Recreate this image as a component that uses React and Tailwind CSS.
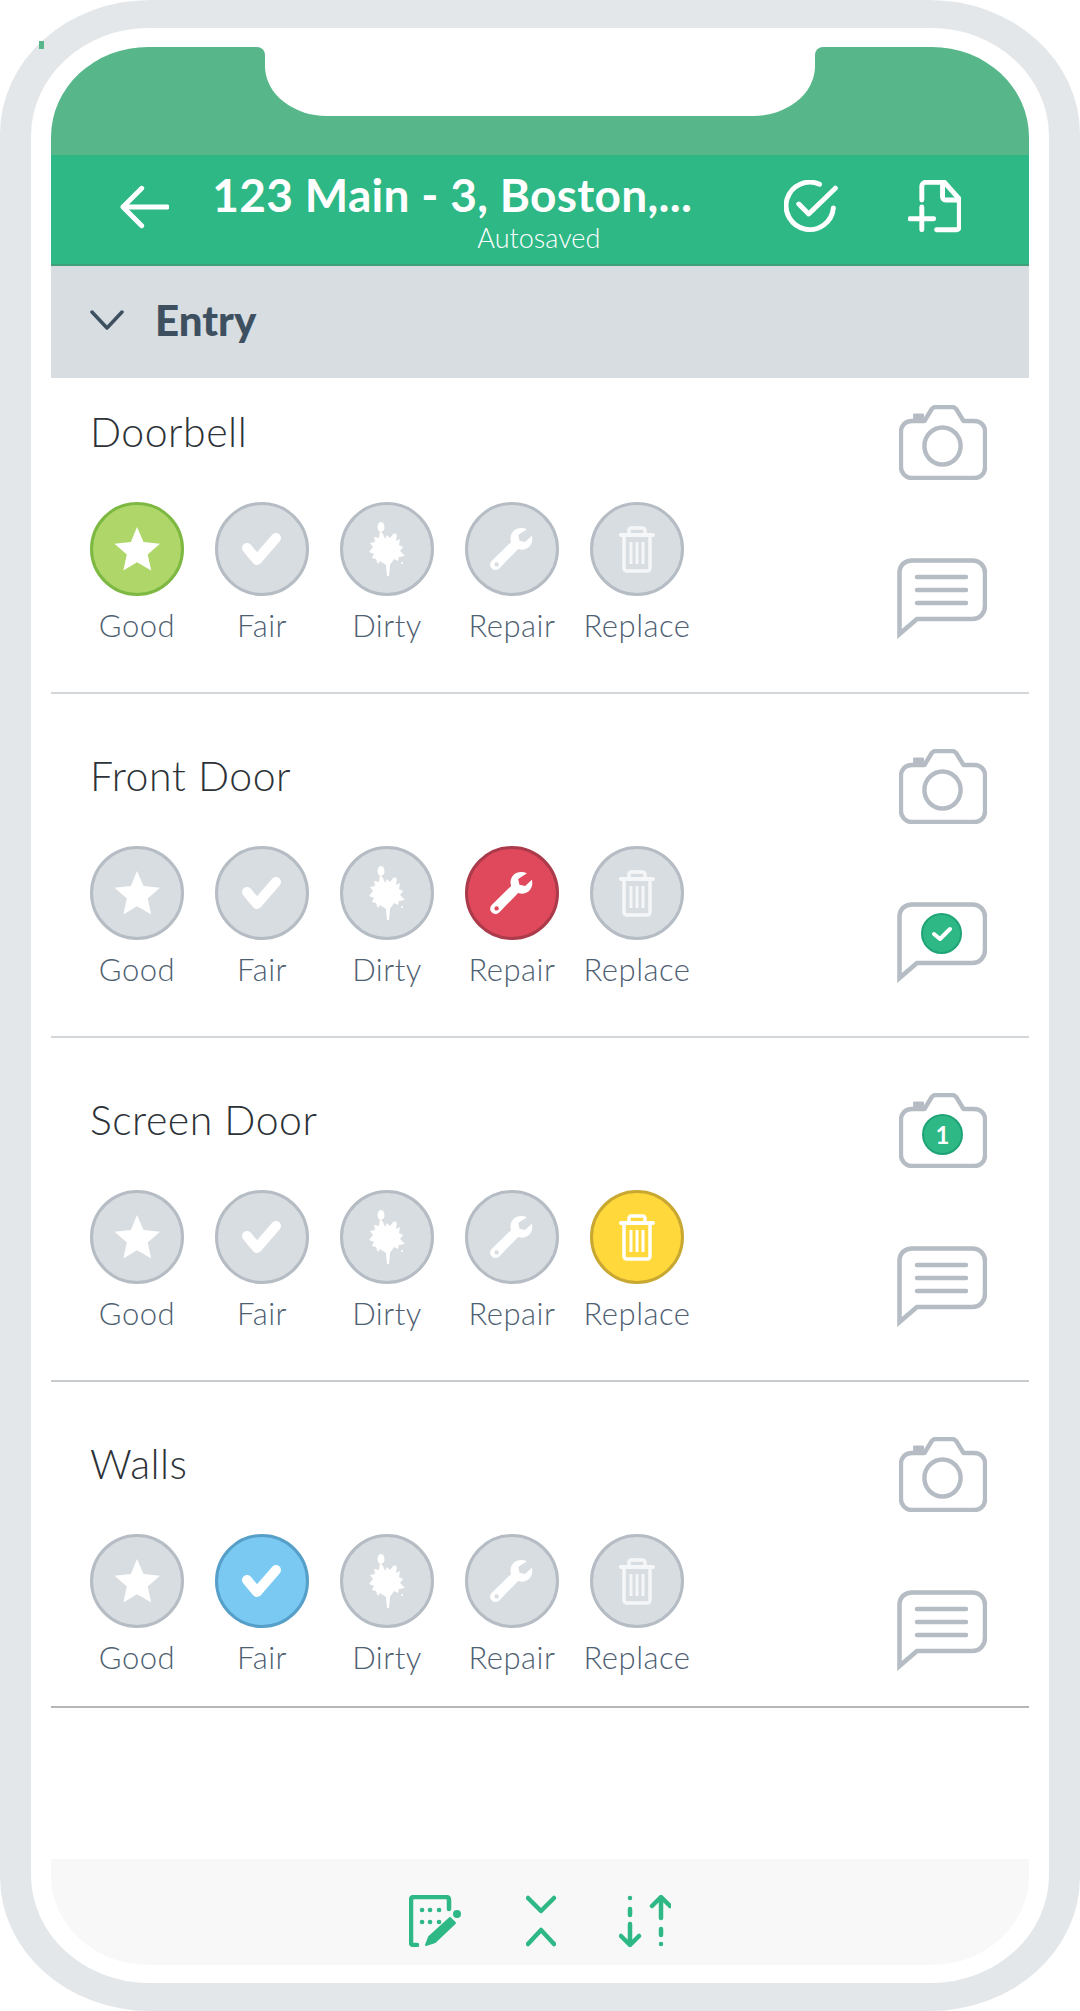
import React from "react";

const Star = () => (
  <svg width="48" height="46" viewBox="0 0 48 46"><path d="M24 1l6.600 15 16.400 1.700-12.300 10.800 3.500 16L24 36.200 10.300 44.500l3.500-16L1.500 17.700 17.900 16z" fill="#fff" /></svg>
);
const Check = () => (
  <svg width="42" height="36" viewBox="0 0 42 36"><path d="M6 17l10 12L35 7" fill="none" stroke="#fff" strokeWidth="10" strokeLinecap="round" strokeLinejoin="round" /></svg>
);
const Splat = () => (
  <svg width="38" height="56" viewBox="0 0 38 56">
    <path d="M12 10L15 13L17 18L19 14L22 17L26 12L29 14L28 20L32 18L31 24L35 26L32 30L37 35L31 36L30 40L26 38L24 41L22 44L21 55L19 55L18 44L15 42L12 40L10 43L8 38L4 37L6 33L1 31L5 26L2 22L7 21L6 16L11 17z" fill="#fff" />
    <ellipse cx="13" cy="6" rx="3.500" ry="5" fill="#fff" />
    <circle cx="34" cy="42" r="1" fill="#fff" />
  </svg>
);
const Wrench = ({ hole }) => (
  <svg width="44" height="44" viewBox="0 0 50 50"><path d="M42 2.500C36 0 29 1 25.500 6c-2.500 3.500-2.700 7.500-1.500 11L2.500 38c-3 3-3 6.500-.5 9s6 2.500 9-.5L32 25c4 1.500 8.500 1 12-2 3.500-3.500 5-8 3.500-13L40 17l-6.500-1.500L32 9z" fill="#fff"/><circle cx="7.500" cy="42.500" r="2.500" fill={hole} /></svg>
);
const Trash = ({ muted }) => (
  <svg className={muted ? "opacity-75" : ""} width="36" height="47" viewBox="0 0 36 47" fill="none" stroke="#fff" strokeWidth="3.500">
    <path d="M2 9h32" strokeWidth="4" strokeLinecap="round" />
    <path d="M10 8V4c0-1 1-2 2-2h12c1 0 2 1 2 2v4" />
    <path d="M5 10v32c0 2 1 3 3 3h20c2 0 3-1 3-3V10" />
    <path d="M12 16v22M18 16v22M24 16v22" strokeWidth="3" />
  </svg>
);

const Camera = ({ badge }) => (
  <div className="relative ml-[2px] h-[75px] w-[88px]">
    <svg width="88" height="75" viewBox="0 0 90 75" preserveAspectRatio="none" fill="none" stroke="#b5bcc4" strokeWidth="4.500" strokeLinejoin="round">
      <path d="M13 16h13l7.500-12c1-1 2-2 3.500-2h18c1.500 0 2.500 1 3.500 2L66 16h11c7 0 11 5 11 10v36c0 7-5 11-11 11H13C7 73 2 68 2 62V27c0-6 4-11 11-11z" />
      <path d="M15 14V9h10v5" fill="#b5bcc4" strokeWidth="1" />
      {!badge && <circle cx="44.500" cy="41" r="18.500" />}
    </svg>
    {badge && (
      <div className="absolute left-[23px] top-[21px] flex h-[41px] w-[41px] items-center justify-center rounded-full border-2 border-[#1fa477] bg-[#2eb886] text-[24px] font-bold text-white">
        {badge}
      </div>
    )}
  </div>
);

const Chat = ({ checked }) => (
  <div className="relative h-[81px] w-[90px]">
    <svg width="90" height="81" viewBox="0 0 90 81" fill="none" stroke="#b5bcc4" strokeWidth="4.500" strokeLinejoin="miter">
      <path d="M2.500 76V15C2.500 7 8 2.500 15 2.500h60C83 2.500 88 8 88 15v33c0 7-5 13-13 13H20L2.500 76z" />
      {!checked && (
        <g strokeWidth="4.500" strokeLinecap="round">
          <path d="M20 19h49M20 32h49M20 45h49" />
        </g>
      )}
    </svg>
    {checked && (
      <div className="absolute left-[24px] top-[11px] flex h-[41px] w-[41px] items-center justify-center rounded-full border-2 border-[#1fa477] bg-[#2eb886]">
        <svg width="22" height="18" viewBox="0 0 22 18"><path d="M3 9l6 5L19 4" fill="none" stroke="#fff" strokeWidth="4" strokeLinecap="round" strokeLinejoin="round" /></svg>
      </div>
    )}
  </div>
);

const OPTIONS = ["Good", "Fair", "Dirty", "Repair", "Replace"];

const SELECTED = {
  Good: "bg-[#aed668] border-[#7db843]",
  Fair: "bg-[#79c9f2] border-[#559fc8]",
  Repair: "bg-[#e0485c] border-[#ab3a4a]",
  Replace: "bg-[#ffd83b] border-[#c9a832]",
};

function OptionIcon({ label, active }) {
  if (label === "Good") return <Star />;
  if (label === "Fair") return <Check />;
  if (label === "Dirty") return <Splat />;
  if (label === "Repair") return <Wrench hole={active ? "#e0485c" : "#d8dde1"} />;
  return <Trash muted={!active} />;
}

const ROWS = [
  { title: "Doorbell", selected: "Good", cls: "pt-[34px] pb-[49px] border-[#d4d7d9]" },
  { title: "Front Door", selected: "Repair", commented: true, cls: "pt-[62px] pb-[49px] border-[#d4d7d9]" },
  { title: "Screen Door", selected: "Replace", photos: "1", cls: "pt-[62px] pb-[49px] border-[#c8cbcd]" },
  { title: "Walls", selected: "Fair", cls: "pt-[62px] pb-[31px] border-[#b4b6b8]" },
];

function Row({ title, selected, commented, photos, cls }) {
  return (
    <div className={`flex justify-between border-b-2 pl-[39px] pr-[42px] ${cls}`}>
      <div>
        <div className="h-[40px] text-[41px] font-light leading-[40px] tracking-[0.5px] text-[#2c3237]">{title}</div>
        <div className="mt-[50px] flex gap-[31px]">
          {OPTIONS.map((label) => (
            <div key={label} className="flex w-[94px] flex-col items-center">
              <div className={`flex h-[94px] w-[94px] items-center justify-center rounded-full border-[3px] ${selected === label ? SELECTED[label] : "border-[#b5bcc4] bg-[#d8dde1]"}`}>
                <OptionIcon label={label} active={selected === label} />
              </div>
              <div className="mt-[11px] h-[36px] whitespace-nowrap text-[31px] font-light leading-[36px] tracking-[0.5px] text-[#4d6072]">{label}</div>
            </div>
          ))}
        </div>
      </div>
      <div className="-mt-[7px] flex flex-col gap-[78px]">
        <Camera badge={photos} />
        <Chat checked={commented} />
      </div>
    </div>
  );
}

export default function App() {
  return (
    <div className="h-[2011px] w-[1080px] bg-white [font-family:Lato,sans-serif]">
      <div className="relative h-full rounded-[150px/134px] bg-[#e4e7ea] px-[31px] py-[28px]">
        <div className="absolute left-[39px] top-[41px] h-[8px] w-[5px] bg-[#57b78b]" />
        <div className="h-full rounded-[118px/108px] bg-white px-[20px] pb-[18px] pt-[19px]">
          <div className="relative flex h-full flex-col overflow-hidden rounded-[97px/90px] bg-white">
            <div className="absolute left-[214px] top-0 h-[69px] w-[550px] rounded-b-[62px_50px] bg-white" />
            <div className="absolute left-[206px] top-0 h-[8px] w-[8px] bg-white">
              <div className="h-full w-full rounded-tr-[8px] bg-[#57b78b]" />
            </div>
            <div className="absolute left-[764px] top-0 h-[8px] w-[8px] bg-white">
              <div className="h-full w-full rounded-tl-[8px] bg-[#57b78b]" />
            </div>
            <div className="h-[108px] shrink-0 bg-[#57b78b]" />
            <header className="flex h-[111px] shrink-0 border-b-2 border-[#3f9f7b] bg-[#2eb886] pl-[69px] pr-[68px] pt-[12px] text-white">
              <svg className="mt-[18px]" width="50" height="44" viewBox="0 0 50 44" fill="none" stroke="#fff" strokeWidth="5" strokeLinecap="round" strokeLinejoin="round">
                <path d="M22 3L3 22l19 19M3 22h45" />
              </svg>
              <div className="ml-[43px] flex flex-col">
                <div className="h-[56px] w-[500px] whitespace-nowrap text-[46px] font-bold leading-[56px] tracking-[0.3px]">123 Main - 3, Boston,...</div>
                <div className="ml-[265px] mt-[2px] text-[27px] font-light leading-[26px] text-white">Autosaved</div>
              </div>
              <svg className="ml-[72px] mt-[13px]" width="54" height="53" viewBox="0 0 54 53" fill="none" stroke="#fff" strokeWidth="5" strokeLinecap="round" strokeLinejoin="round">
                <path d="M36 4A24 24 0 1 0 50 28" />
                <path d="M15 24l10 10L52 8" />
              </svg>
              <svg className="ml-[70px] mt-[13px]" width="54" height="53" viewBox="0 0 54 53" fill="none" stroke="#fff" strokeWidth="5" strokeLinecap="round" strokeLinejoin="round">
                <path d="M14 20V6c0-2 2-4 4-4h19l15 17v28c0 2-2 3-3 3H29" />
                <path d="M35 3v14c0 1 1 3 3 3h14" />
                <path d="M2 39h24M14 27v23" />
              </svg>
            </header>
            <div className="flex h-[112px] shrink-0 items-center bg-[#d8dde1] pb-[4px] pl-[39px]">
              <svg width="34" height="20" viewBox="0 0 34 20" fill="none" stroke="#3e5060" strokeWidth="3.500" strokeLinecap="round" strokeLinejoin="round">
                <path d="M2 2l15 16L32 2" />
              </svg>
              <span className="ml-[31px] text-[42px] font-black text-[#3e5060]">Entry</span>
            </div>
            <div className="flex-1">
              {ROWS.map((r) => (
                <Row key={r.title} {...r} />
              ))}
            </div>
            <footer className="flex h-[106px] shrink-0 justify-center gap-[63px] bg-[#f8f8f8] pt-[36px]">
              <svg width="54" height="52" viewBox="0 0 54 52" fill="none" stroke="#2eb886" strokeWidth="4.500" strokeLinecap="round" strokeLinejoin="round">
                <path d="M40 14V5c0-2-1-3-3-3H5C3 2 2 3 2 5v43c0 1 1 2 2 2h4" />
                <path d="M13 15h.1M21 15h.1M30 15h.1M13 27h.1M21 27h.1M30 27h.1" strokeWidth="4.500" />
                <path d="M17 50l3-8L41 23l5 5-20 19z" fill="#2eb886" stroke="#2eb886" strokeWidth="2" />
                <circle cx="48" cy="19" r="4" fill="#2eb886" stroke="none" />
              </svg>
              <svg width="30" height="52" viewBox="0 0 30 52" fill="none" stroke="#2eb886" strokeWidth="4.500" strokeLinecap="round" strokeLinejoin="round">
                <path d="M2 3l13 13L28 3M2 49l13-14 13 14" />
              </svg>
              <svg width="52" height="52" viewBox="0 0 52 52" fill="none" stroke="#2eb886" strokeWidth="4.500" strokeLinecap="round" strokeLinejoin="round">
                <path d="M11 3v.1M11 14v6M11 29v20M2 41l9 9 9-9" />
                <path d="M42 49v.1M42 34v6M42 3v20M33 11l9-9 9 9" />
              </svg>
            </footer>
          </div>
        </div>
      </div>
    </div>
  );
}
